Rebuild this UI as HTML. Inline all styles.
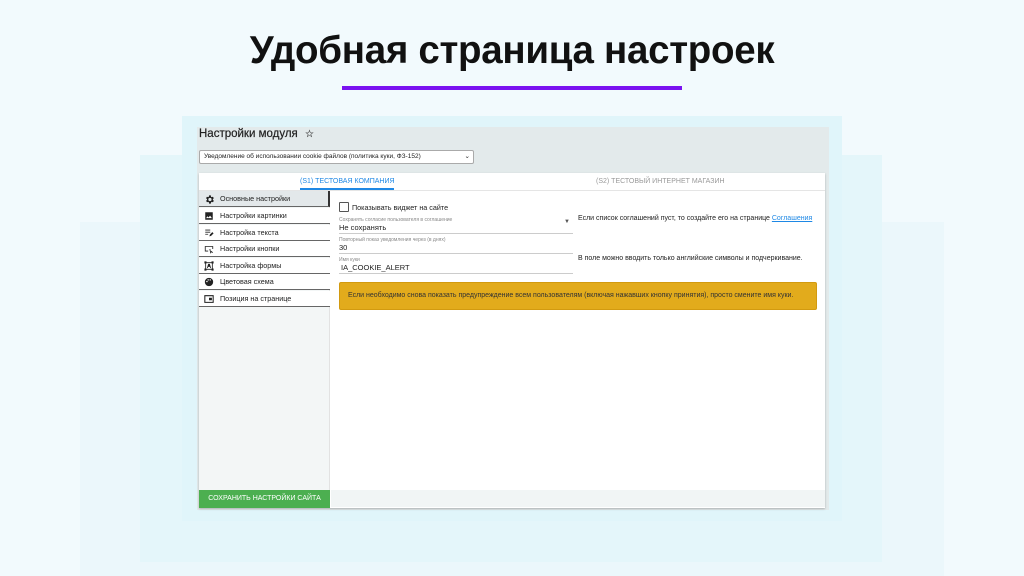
<!DOCTYPE html>
<html><head><meta charset="utf-8"><style>
*{margin:0;padding:0;box-sizing:border-box}
body{width:1024px;height:576px;overflow:hidden;background:#f2fafd;font-family:"Liberation Sans",sans-serif;position:relative;color:#222}
.l{position:absolute}
h1{position:absolute;left:0;width:1024px;top:29px;text-align:center;font-size:38.5px;font-weight:bold;color:#111;letter-spacing:-0.3px}
.t{position:absolute;font-size:7px;white-space:nowrap}
.nav{position:absolute;left:199px;width:131px;height:16px;border-bottom:1.5px solid #666;background:#fff;font-size:7.2px;padding-left:21px;line-height:15px}
.nav svg{position:absolute;left:5px;top:3px}
.inp{position:absolute;left:339px;width:234px;border-bottom:1px solid #ccc}
</style></head><body>
<div class="l" style="left:80px;top:222px;width:864px;height:354px;background:#ebf7fb"></div>
<div class="l" style="left:140px;top:155px;width:742px;height:407px;background:#e4f6fa"></div>
<div class="l" style="left:182px;top:116px;width:660px;height:405px;background:#e0f5fa"></div>
<h1>Удобная страница настроек</h1>
<div class="l" style="left:342px;top:86px;width:340px;height:4px;background:#7a12f0"></div>

<div class="l" style="left:197px;top:127px;width:632px;height:383px;background:#e3eaeb"></div>
<div class="t" style="left:199px;top:128px;font-size:11.5px;color:#222;-webkit-text-stroke:0.2px #222">Настройки модуля <span style="color:#999;font-size:10px;margin-left:4px">☆</span></div>
<div class="l" style="left:199px;top:150px;width:275px;height:14px;background:#fff;border:1px solid #aaa;border-radius:2px;font-size:6.5px;line-height:12px;padding-left:4px">Уведомление об использовании cookie файлов (политика куки, ФЗ-152)<span style="position:absolute;right:3px;top:0">⌄</span></div>

<div class="l" style="left:199px;top:173px;width:626px;height:335px;background:#fff;box-shadow:0 1px 2px rgba(0,0,0,.25)"></div>
<div class="l" style="left:199px;top:190px;width:626px;height:1px;background:#e5e5e5"></div>
<div class="t" style="left:300px;top:178px;color:#1e88e5;font-size:7px">(S1) ТЕСТОВАЯ КОМПАНИЯ</div>
<div class="l" style="left:300px;top:188px;width:94px;height:2px;background:#1e88e5"></div>
<div class="t" style="left:596px;top:178px;color:#999;font-size:7px">(S2) ТЕСТОВЫЙ ИНТЕРНЕТ МАГАЗИН</div>

<div class="l" style="left:199px;top:191px;width:131px;height:299px;background:#f3f6f6;border-right:1px solid #e2e2e2"></div>
<div class="nav" style="top:191px;background:#e3e8ea;border-right:2px solid #333">
<svg width="11" height="11" viewBox="0 0 24 24"><path fill="#222" d="M19.4 13a7.5 7.5 0 000-2l2.1-1.6-2-3.5-2.5 1a7 7 0 00-1.7-1L15 3h-4l-.4 2.9a7 7 0 00-1.7 1l-2.5-1-2 3.5L6.6 11a7.5 7.5 0 000 2l-2.1 1.6 2 3.5 2.5-1a7 7 0 001.7 1L11 21h4l.4-2.9a7 7 0 001.7-1l2.5 1 2-3.5zM13 15.5a3.5 3.5 0 110-7 3.5 3.5 0 010 7z"/></svg>Основные настройки</div>
<div class="nav" style="top:208px"><svg width="10" height="10" viewBox="0 0 24 24"><path fill="#222" d="M3 3h18v18H3zM5 17h14l-4.5-6-3.5 4.5-2.5-3z"/></svg>Настройки картинки</div>
<div class="nav" style="top:224.5px"><svg width="10" height="10" viewBox="0 0 24 24"><path fill="#222" d="M3 4h12v2H3zM3 9h12v2H3zM3 14h7v2H3zM13 20l1-4 6-6 3 3-6 6z"/></svg>Настройка текста</div>
<div class="nav" style="top:241px"><svg width="10" height="10" viewBox="0 0 24 24"><path fill="none" stroke="#222" stroke-width="2" d="M10 17H3V6h18v6M14 12l2 9 2-3 3 3"/></svg>Настройки кнопки</div>
<div class="nav" style="top:257.5px"><svg width="10" height="10" viewBox="0 0 24 24"><path fill="none" stroke="#222" stroke-width="2" d="M4 4h16v16H4z"/><path fill="#222" d="M1 1h5v5H1zM18 1h5v5h-5zM1 18h5v5H1zM18 18h5v5h-5zM10 7h4l3 10h-2l-1-3h-4l-1 3H7z"/></svg>Настройка формы</div>
<div class="nav" style="top:274px"><svg width="10" height="10" viewBox="0 0 24 24"><circle cx="12" cy="12" r="10" fill="#222"/><circle cx="7" cy="11" r="1.7" fill="#fff"/><circle cx="10" cy="7" r="1.7" fill="#fff"/><circle cx="15" cy="7" r="1.7" fill="#fff"/></svg>Цветовая схема</div>
<div class="nav" style="top:290.5px"><svg width="10" height="10" viewBox="0 0 24 24"><path fill="none" stroke="#222" stroke-width="2.5" d="M2 4h20v16H2z"/><path fill="#222" d="M12 9h7v6h-7z"/></svg>Позиция на странице</div>

<div class="l" style="left:339px;top:202px;width:10px;height:10px;border:1.3px solid #555;border-radius:1px"></div>
<div class="t" style="left:352px;top:203px;font-size:7.2px">Показывать виджет на сайте</div>
<div class="inp" style="top:216px;height:18px"></div>
<div class="t" style="left:339px;top:217px;font-size:5px;color:#888">Сохранять согласие пользователя в соглашение</div>
<div class="t" style="left:339px;top:223px;font-size:7.5px">Не сохранять</div>
<div class="t" style="left:564px;top:219px;font-size:6px;color:#555">▼</div>
<div class="inp" style="top:236px;height:18px"></div>
<div class="t" style="left:339px;top:237px;font-size:5px;color:#888">Повторный показ уведомления через (в днях)</div>
<div class="t" style="left:339px;top:243px;font-size:7.5px">30</div>
<div class="inp" style="top:256px;height:18px"></div>
<div class="t" style="left:339px;top:257px;font-size:5px;color:#888">Имя куки</div>
<div class="t" style="left:341px;top:263px;font-size:7.5px">IA_COOKIE_ALERT</div>
<div class="t" style="left:578px;top:215px;font-size:7px">Если список соглашений пуст, то создайте его на странице <span style="color:#1e88e5;text-decoration:underline">Соглашения</span></div>
<div class="t" style="left:578px;top:255px;font-size:7px">В поле можно вводить только английские символы и подчеркивание.</div>
<div class="l" style="left:339px;top:282px;width:478px;height:28px;background:#e2ab1c;border:1px solid #d29a10;border-radius:2px;font-size:7px;line-height:26px;padding-left:8px;color:#333">Если необходимо снова показать предупреждение всем пользователям (включая нажавших кнопку принятия), просто смените имя куки.</div>

<div class="l" style="left:331px;top:490px;width:494px;height:17px;background:#f1f5f5"></div>
<div class="l" style="left:199px;top:490px;width:131px;height:18px;background:#4caf50;color:#fff;font-size:7px;line-height:18px;text-align:center">СОХРАНИТЬ НАСТРОЙКИ САЙТА</div>
</body></html>
